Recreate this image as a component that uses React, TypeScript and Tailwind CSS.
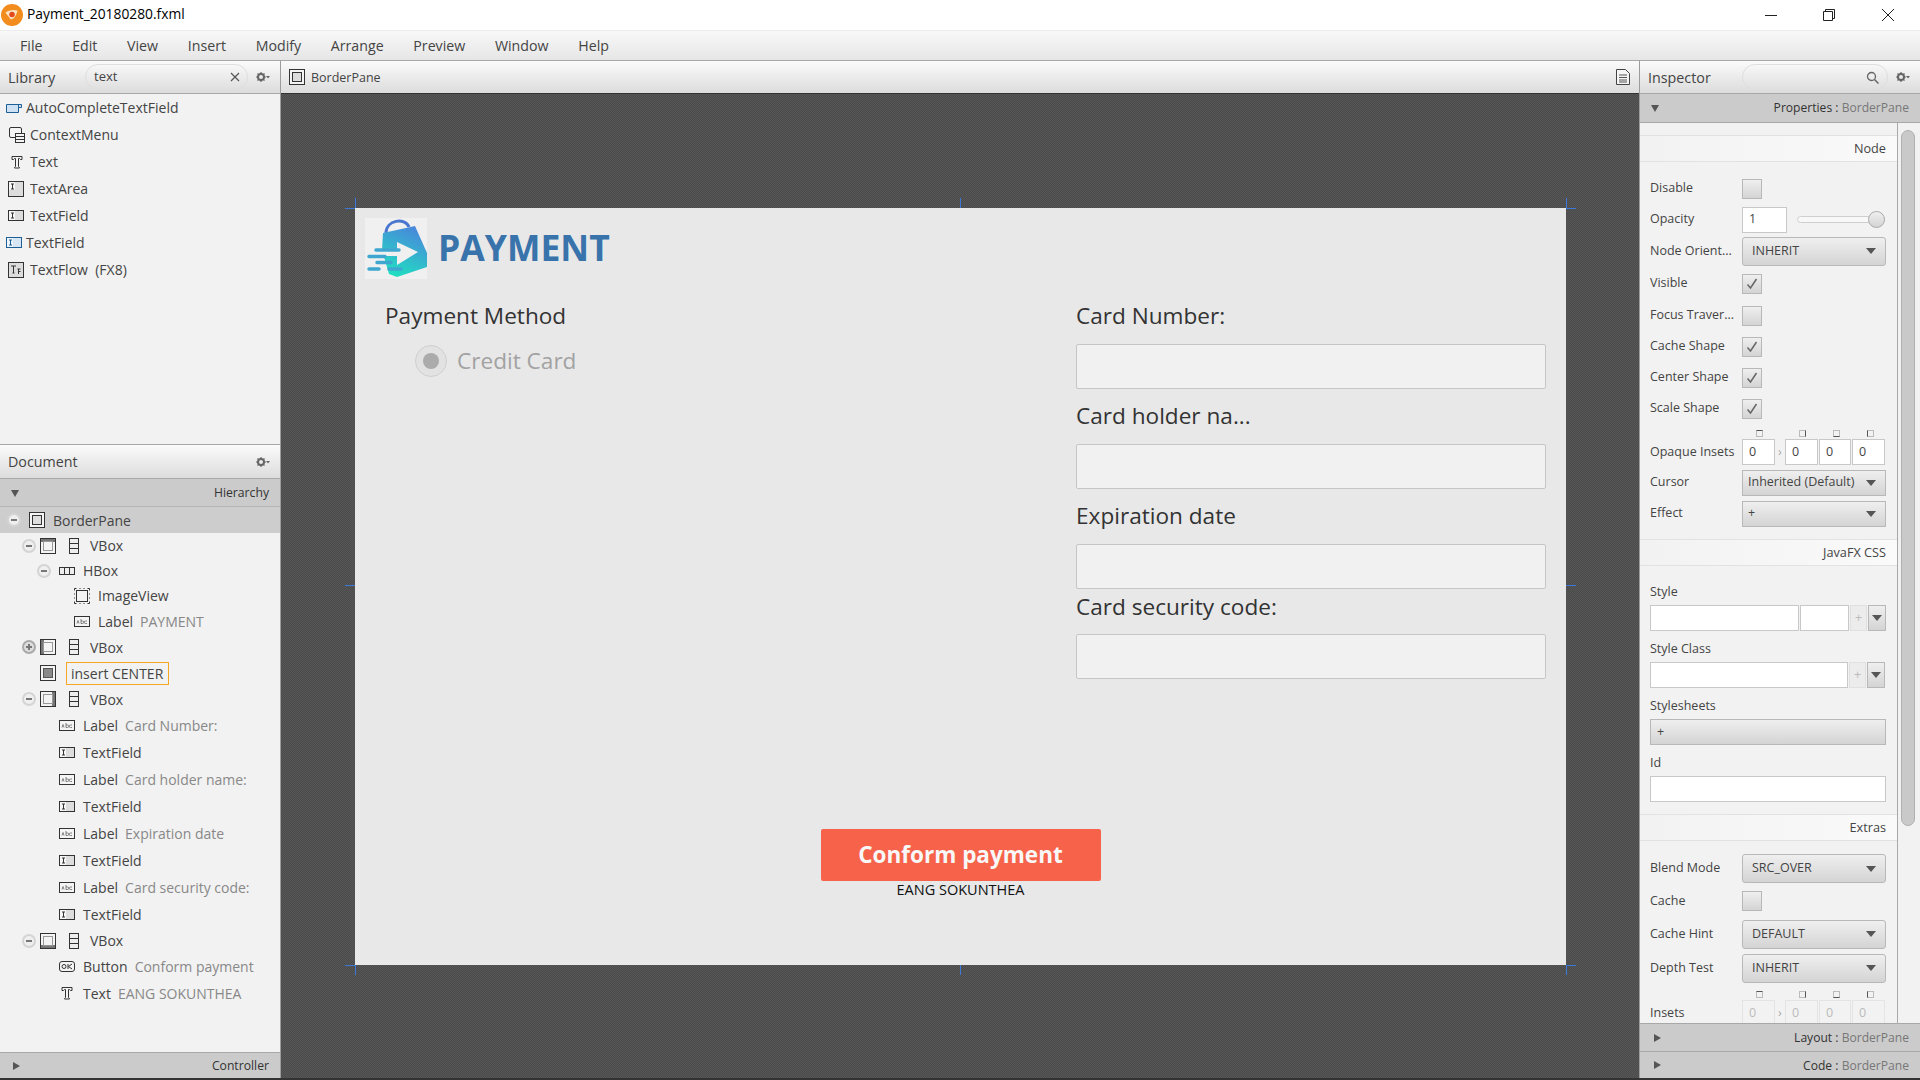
import type { ReactNode } from 'react'

const font = "font-['Open_Sans',sans-serif]"
const barGradient = 'bg-gradient-to-b from-[#fbfbfb] to-[#dcdcdc]'
const buttonGradient = 'bg-gradient-to-b from-[#efefef] to-[#d4d4d4]'

function Gear() {
  return (
    <svg width="14" height="10" viewBox="0 0 14 10" className="shrink-0">
      <circle cx="5" cy="5" r="3" fill="none" stroke="#666" strokeWidth="2" />
      <path d="M5 0v2M5 8v2M0 5h2M8 5h2M1.500 1.500l1.400 1.400M7.100 7.100l1.400 1.400M1.500 8.500l1.400-1.400M7.100 2.900l1.400-1.400" stroke="#666" strokeWidth="1.200" />
      <path d="M10 4h4l-2 2.500z" fill="#666" />
    </svg>
  )
}

function Chevron({ open, className }: { open: boolean; className?: string }) {
  return (
    <svg width="10" height="10" viewBox="0 0 10 10" className={className}>
      {open ? <path d="M1 2h8l-4 7z" fill="#555" /> : <path d="M2 1l7 4-7 4z" fill="#555" />}
    </svg>
  )
}

function Caret() {
  return (
    <svg width="10" height="6" viewBox="0 0 10 6" className="shrink-0">
      <path d="M0 0h10L5 6z" fill="#555" />
    </svg>
  )
}

function PaneIcon({ region }: { region: 'top' | 'left' | 'center' | 'right' | 'bottom' | 'all' }) {
  return (
    <svg width="16" height="16" viewBox="0 0 16 16" className="shrink-0">
      <rect x="0.500" y="0.500" width="15" height="15" fill="#f4f4f4" stroke="#333" />
      {region === 'top' && <rect x="1" y="1" width="14" height="3" fill="#777" />}
      {region === 'left' && <rect x="1" y="1" width="3" height="14" fill="#777" />}
      {region === 'right' && <rect x="12" y="1" width="3" height="14" fill="#777" />}
      {region === 'bottom' && <rect x="1" y="12" width="14" height="3" fill="#777" />}
      {region === 'center' && <rect x="3.500" y="3.500" width="9" height="9" fill="#8a8a8a" stroke="#555" />}
      {region === 'all' && <rect x="3.500" y="3.500" width="9" height="9" fill="#ddd" stroke="#333" />}
      {region !== 'center' && region !== 'all' && <rect x="3.500" y="3.500" width="9" height="9" fill="none" stroke="#999" />}
    </svg>
  )
}

function VBoxIcon() {
  return (
    <svg width="10" height="16" viewBox="0 0 10 16" className="shrink-0">
      <rect x="0.500" y="0.500" width="9" height="15" fill="#eee" stroke="#333" />
      <path d="M0 5.500h10M0 10.500h10" stroke="#333" />
    </svg>
  )
}

function HBoxIcon() {
  return (
    <svg width="16" height="8" viewBox="0 0 16 8" className="shrink-0">
      <rect x="0.500" y="0.500" width="15" height="7" fill="#eee" stroke="#333" />
      <path d="M5.500 0v8M10.500 0v8" stroke="#333" />
    </svg>
  )
}

function ImageIcon() {
  return (
    <svg width="16" height="16" viewBox="0 0 16 16" className="shrink-0">
      <rect x="2.500" y="2.500" width="11" height="11" fill="#f4f4f4" stroke="#333" />
      <path d="M0.500 2.500v-2h2M5.500 0.500h1M9.500 0.500h1M13.500 0.500h2v2M0.500 5.500v1M0.500 9.500v1M15.500 5.500v1M15.500 9.500v1M0.500 13.500v2h2M5.500 15.500h1M9.500 15.500h1M13.500 15.500h2v-2" stroke="#333" fill="none" />
    </svg>
  )
}

function LabelIcon() {
  return (
    <svg width="16" height="11" viewBox="0 0 16 11" className="shrink-0">
      <rect x="0.500" y="0.500" width="15" height="10" fill="#f4f4f4" stroke="#333" />
      <path d="M3 7.500l1-3 1 3M7 3v4.500h1.500a1 1 0 000-2.500H7M13 5h-1.500a1.200 1.200 0 000 2.500H13" stroke="#666" fill="none" strokeWidth="0.800" />
    </svg>
  )
}

function FieldIcon({ blue }: { blue?: boolean }) {
  const line = blue ? '#1c5f96' : '#333'
  return (
    <svg width="16" height="11" viewBox="0 0 16 11" className="shrink-0">
      <rect x="0.500" y="0.500" width="15" height="10" fill={blue ? '#d6e6f4' : '#ddd'} stroke={line} />
      <rect x="1" y="1" width="6" height="9" fill={blue ? '#eef5fb' : '#f6f6f6'} />
      <path d="M3 3h3M4.500 3v5M3 8h3" stroke={line} />
    </svg>
  )
}

function AreaIcon() {
  return (
    <svg width="16" height="16" viewBox="0 0 16 16" className="shrink-0">
      <rect x="0.500" y="0.500" width="15" height="15" fill="#ddd" stroke="#333" />
      <rect x="1" y="1" width="6" height="8" fill="#f6f6f6" />
      <path d="M3 3h3M4.500 3v5M3 8h3" stroke="#333" />
    </svg>
  )
}

function FlowIcon() {
  return (
    <svg width="16" height="16" viewBox="0 0 16 16" className="shrink-0">
      <rect x="0.500" y="0.500" width="15" height="15" fill="#ddd" stroke="#333" />
      <path d="M3 4h5M5.500 4v7M4.500 11h2M9.500 7h3M10.500 7v5M10.500 9.500h2" stroke="#333" fill="none" />
    </svg>
  )
}

function TextIcon() {
  return (
    <svg width="16" height="16" viewBox="0 0 16 16" className="shrink-0">
      <path d="M3 2.500h10v3h-1.500l-1-1H9.500v8l1 1v.5h-5v-.5l1-1v-8H5.500l-1 1H3z" fill="#f4f4f4" stroke="#333" />
    </svg>
  )
}

function OkIcon() {
  return (
    <svg width="16" height="11" viewBox="0 0 16 11" className="shrink-0">
      <rect x="0.500" y="0.500" width="15" height="10" rx="2.500" fill="#f4f4f4" stroke="#333" />
      <circle cx="5" cy="5.500" r="2" fill="none" stroke="#333" />
      <path d="M9 3v5M13 3l-3.500 2.500L13 8" fill="none" stroke="#333" />
    </svg>
  )
}

function MenuIcon() {
  return (
    <svg width="16" height="16" viewBox="0 0 16 16" className="shrink-0">
      <rect x="0.500" y="0.500" width="12" height="10" rx="1.500" fill="#f4f4f4" stroke="#333" />
      <rect x="6.500" y="6.500" width="9" height="9" fill="#f4f4f4" stroke="#333" />
      <path d="M6.500 9.500h9M6.500 12.500h9" stroke="#333" />
    </svg>
  )
}

function AutoIcon() {
  return (
    <svg width="16" height="11" viewBox="0 0 16 11" className="shrink-0">
      <path d="M0.500 2.500h15v3h-3v5h-12z" fill="#cfe2f3" stroke="#1c5f96" />
      <path d="M12.500 5.500V2.500" stroke="#1c5f96" />
    </svg>
  )
}

function Expander({ plus }: { plus?: boolean }) {
  return (
    <span className={`flex h-[14px] w-[14px] shrink-0 items-center justify-center rounded-full border-2 ${plus ? 'border-[#aaa] bg-[#ddd]' : 'border-[#d4d4d4] bg-[#efefef]'}`}>
      <span className="relative block h-[2px] w-[6px] bg-[#777]">
        {plus && <span className="absolute left-[2px] top-[-2px] h-[6px] w-[2px] bg-[#777]" />}
      </span>
    </span>
  )
}

function Logo() {
  return (
    <div className="h-[61px] w-[62px] shrink-0 bg-[#f0f0f0]">
      <svg width="62" height="61" viewBox="0 0 62 61">
        <defs>
          <linearGradient id="bag" x1="0.700" y1="0" x2="0.300" y2="1">
            <stop offset="0" stopColor="#4a86dc" />
            <stop offset="1" stopColor="#1fe0c0" />
          </linearGradient>
        </defs>
        <path d="M21 15C21 2 40 -1 44 9" fill="none" stroke="#4a76cf" strokeWidth="3" />
        <path d="M18 15L50 8L62 35V49L32 59L24 56L17 32z" fill="url(#bag)" />
        <path d="M10 31H32V24L53 34L32 47V38H8z" fill="#f0f0f0" />
        <path d="M11 32H34M4 38.500H20M12 44.500H26M4 51H14M24 51H36" stroke="#3fa6cf" strokeWidth="3.500" strokeLinecap="round" />
      </svg>
    </div>
  )
}

const libraryItems: { icon: ReactNode; name: string; pad: string }[] = [
  { icon: <AutoIcon />, name: 'AutoCompleteTextField', pad: 'pl-[6px] gap-[4px]' },
  { icon: <MenuIcon />, name: 'ContextMenu', pad: 'pl-[9px] gap-[5px]' },
  { icon: <TextIcon />, name: 'Text', pad: 'pl-[9px] gap-[5px]' },
  { icon: <AreaIcon />, name: 'TextArea', pad: 'pl-[8px] gap-[6px]' },
  { icon: <FieldIcon />, name: 'TextField', pad: 'pl-[8px] gap-[6px]' },
  { icon: <FieldIcon blue />, name: 'TextField', pad: 'pl-[6px] gap-[4px]' },
  { icon: <FlowIcon />, name: 'TextFlow  (FX8)', pad: 'pl-[8px] gap-[6px]' },
]

function TreeRow({ h, children }: { h: string; children: ReactNode }) {
  return <div className={`flex items-center ${h}`}>{children}</div>
}

function Leaf({ h, pad, icon, name, value }: { h: string; pad: string; icon: ReactNode; name: string; value?: string }) {
  return (
    <TreeRow h={`${h} ${pad} gap-[8px]`}>
      <span className="flex w-[16px] shrink-0 justify-center">{icon}</span>
      <span className="text-[#444]">{name}</span>
      {value && <span className="ml-[-1px] text-[#888]">{value}</span>}
    </TreeRow>
  )
}

function VBoxRow({ h, region, plus }: { h: string; region: 'top' | 'left' | 'right' | 'bottom'; plus?: boolean }) {
  return (
    <TreeRow h={`${h} pl-[22px]`}>
      <Expander plus={plus} />
      <span className="ml-[4px]"><PaneIcon region={region} /></span>
      <span className="ml-[13px]"><VBoxIcon /></span>
      <span className="ml-[11px] text-[#444]">VBox</span>
    </TreeRow>
  )
}

function Hierarchy() {
  return (
    <div className="flex-1 overflow-hidden">
      <TreeRow h="h-[26px] bg-[#cdcdcd] pl-[7px]">
        <Expander />
        <span className="ml-[8px]"><PaneIcon region="all" /></span>
        <span className="ml-[8px] text-[#444]">BorderPane</span>
      </TreeRow>
      <VBoxRow h="h-[25px]" region="top" />
      <TreeRow h="h-[25px] pl-[37px]">
        <Expander />
        <span className="ml-[8px]"><HBoxIcon /></span>
        <span className="ml-[8px] text-[#444]">HBox</span>
      </TreeRow>
      <Leaf h="h-[25px]" pad="pl-[74px]" icon={<ImageIcon />} name="ImageView" />
      <Leaf h="h-[26px]" pad="pl-[74px]" icon={<LabelIcon />} name="Label" value="PAYMENT" />
      <VBoxRow h="h-[26px]" region="left" plus />
      <TreeRow h="h-[26px] pl-[40px]">
        <PaneIcon region="center" />
        <span className="ml-[10px] flex h-[23px] w-[103px] items-center border border-[#f5a623] pl-[4px] text-[#444]">insert CENTER</span>
      </TreeRow>
      <VBoxRow h="h-[26px]" region="right" />
      <Leaf h="h-[27px]" pad="pl-[59px]" icon={<LabelIcon />} name="Label" value="Card Number:" />
      <Leaf h="h-[27px]" pad="pl-[59px]" icon={<FieldIcon />} name="TextField" />
      <Leaf h="h-[27px]" pad="pl-[59px]" icon={<LabelIcon />} name="Label" value="Card holder name:" />
      <Leaf h="h-[27px]" pad="pl-[59px]" icon={<FieldIcon />} name="TextField" />
      <Leaf h="h-[27px]" pad="pl-[59px]" icon={<LabelIcon />} name="Label" value="Expiration date" />
      <Leaf h="h-[27px]" pad="pl-[59px]" icon={<FieldIcon />} name="TextField" />
      <Leaf h="h-[27px]" pad="pl-[59px]" icon={<LabelIcon />} name="Label" value="Card security code:" />
      <Leaf h="h-[27px]" pad="pl-[59px]" icon={<FieldIcon />} name="TextField" />
      <VBoxRow h="h-[25px]" region="bottom" />
      <Leaf h="h-[27px]" pad="pl-[59px]" icon={<OkIcon />} name="Button" value="Conform payment" />
      <Leaf h="h-[26px]" pad="pl-[59px]" icon={<TextIcon />} name="Text" value="EANG SOKUNTHEA" />
    </div>
  )
}

function LeftPanel() {
  return (
    <aside className="flex w-[281px] shrink-0 flex-col border-r border-[#9c9c9c] bg-[#f2f2f2]">
      <div className={`flex h-[33px] items-center border-b border-[#a8a8a8] pl-[8px] pr-[10px] text-[14.5px] text-[#444] ${barGradient}`}>
        <span className="mt-px w-[77px]">Library</span>
        <div className="flex h-[26px] w-[163px] items-center justify-between rounded-full border border-[#dedede] pl-[8px] pr-[7px] text-[13px]">
          <span>text</span>
          <svg width="10" height="10" viewBox="0 0 10 10"><path d="M1 1l8 8M9 1L1 9" stroke="#555" strokeWidth="1.200" /></svg>
        </div>
        <span className="ml-[8px]"><Gear /></span>
      </div>
      <div className="h-[350px]">
        {libraryItems.map((item, i) => (
          <div key={i} className={`flex h-[27px] items-center whitespace-pre text-[#444] ${item.pad}`}>
            <span className="flex w-[16px] justify-center">{item.icon}</span>
            <span>{item.name}</span>
          </div>
        ))}
      </div>
      <div className={`flex h-[35px] items-center justify-between border-y border-[#a8a8a8] pl-[8px] pr-[10px] text-[14.3px] text-[#444] ${barGradient}`}>
        <span className="mt-px">Document</span>
        <Gear />
      </div>
      <div className="flex h-[28px] items-center justify-between border-b border-[#b5b5b5] bg-[#cbcbcb] pl-[10px] pr-[11px] text-[12.2px] text-[#333]">
        <Chevron open />
        <span className="mt-px">Hierarchy</span>
      </div>
      <Hierarchy />
      <div className="flex h-[26px] items-center justify-between border-t border-[#a8a8a8] bg-[#cbcbcb] pl-[11px] pr-[11px] text-[12.2px] text-[#333]">
        <Chevron open={false} />
        <span className="mt-[2px]">Controller</span>
      </div>
    </aside>
  )
}

function Handle({ className }: { className: string }) {
  return <span className={`absolute bg-[#3b78d8] ${className}`} />
}

const cardLabel = 'flex h-[34px] items-center text-[22.6px] text-[#333]'
const cardField = 'mt-[11px] h-[45px] border border-[#c6c6c6] rounded-[2px] bg-[#f1f1f1]'

function Card() {
  return (
    <div className="relative flex h-[757px] w-[1211px] flex-col bg-[#e8e8e8]">
      <Handle className="left-[-10px] top-0 h-px w-[10px]" />
      <Handle className="left-0 top-[-10px] h-[10px] w-px" />
      <Handle className="left-[605px] top-[-10px] h-[10px] w-px" />
      <Handle className="right-[-1px] top-[-10px] h-[10px] w-px" />
      <Handle className="right-[-10px] top-0 h-px w-[10px]" />
      <Handle className="left-[-10px] top-[377px] h-px w-[10px]" />
      <Handle className="right-[-10px] top-[377px] h-px w-[10px]" />
      <Handle className="bottom-[-1px] left-[-10px] h-px w-[10px]" />
      <Handle className="bottom-[-10px] left-0 h-[10px] w-px" />
      <Handle className="bottom-[-10px] left-[605px] h-[10px] w-px" />
      <Handle className="bottom-[-10px] right-[-1px] h-[10px] w-px" />
      <Handle className="bottom-[-1px] right-[-10px] h-px w-[10px]" />

      <div className="flex h-[71px] items-start gap-[11px] pl-[10px] pt-[10px]">
        <Logo />
        <h1 className="mt-[4px] text-[35.5px] font-bold leading-[50px] text-[#3873ab]">PAYMENT</h1>
      </div>

      <div className="flex h-[550px] justify-between pr-[20px]">
        <div className="pl-[30px] pt-[20px]">
          <div className={cardLabel}>Payment Method</div>
          <div className="ml-[30px] mt-[11px] flex items-center gap-[10px]">
            <span className="flex h-[32px] w-[32px] items-center justify-center rounded-full border border-[#cfcfcf] bg-[#e2e2e2]">
              <span className="h-[16px] w-[16px] rounded-full bg-[#ababab]" />
            </span>
            <span className="text-[22.6px] text-[#a2a2a2]">Credit Card</span>
          </div>
        </div>
        <div className="w-[470px] pt-[20px]">
          <div className={cardLabel}>Card Number:</div>
          <div className={cardField} />
          <div className={`${cardLabel} mt-[10px]`}>Card holder na...</div>
          <div className={cardField} />
          <div className={`${cardLabel} mt-[10px]`}>Expiration date</div>
          <div className={cardField} />
          <div className={`${cardLabel} mt-px`}>Card security code:</div>
          <div className="mt-[10px] h-[45px] rounded-[2px] border border-[#c6c6c6] bg-[#f1f1f1]" />
        </div>
      </div>

      <div className="flex flex-col items-center">
        <button className="h-[52px] w-[280px] rounded-[2px] bg-[#f7634a] text-[22.5px] font-bold text-[#f8f8f8]">Conform payment</button>
        <span className="text-[14.5px] leading-[18px] text-[#111]">EANG SOKUNTHEA</span>
      </div>
    </div>
  )
}

function Center() {
  return (
    <main className="flex min-w-0 flex-1 flex-col">
      <div className={`flex h-[33px] items-center justify-between border-b border-[#333] pl-[8px] pr-[9px] text-[12.5px] text-[#444] ${barGradient}`}>
        <div className="flex items-center gap-[6px]">
          <PaneIcon region="all" />
          <span className="mt-[2px]">BorderPane</span>
        </div>
        <svg width="14" height="16" viewBox="0 0 14 16">
          <path d="M0.500 0.500h9l4 4v11h-13z" fill="#f6f6f6" stroke="#444" />
          <path d="M3 6h8M3 8.500h8M3 11h8M3 13h8" stroke="#555" />
        </svg>
      </div>
      <div className="flex-1 bg-[repeating-conic-gradient(#575757_0_25%,#4a4a4a_0_50%)] bg-[length:2px_2px] pl-[74px] pt-[114px]">
        <Card />
      </div>
    </main>
  )
}

function Section({ title }: { title: string }) {
  return (
    <div className="flex h-[27px] items-center justify-end border-y border-[#e2e2e2] bg-gradient-to-r from-[#f2f2f2] to-[#fafafa] pr-[11px] text-[12.7px] text-[#444]">
      {title}
    </div>
  )
}

function Row({ label, h, children }: { label: string; h: string; children: ReactNode }) {
  return (
    <div className={`flex items-center pl-[10px] text-[12.5px] text-[#444] ${h}`}>
      <span className="w-[91px] shrink-0 whitespace-nowrap">{label}</span>
      <span className="flex items-center pl-px">{children}</span>
    </div>
  )
}

function CheckBox({ checked }: { checked?: boolean }) {
  return (
    <span className={`flex h-[20px] w-[20px] items-center justify-center border border-[#b8b8b8] ${buttonGradient}`}>
      {checked && (
        <svg width="12" height="12" viewBox="0 0 12 12"><path d="M1.500 6.500l3 3.500 6-9" fill="none" stroke="#666" strokeWidth="1.500" /></svg>
      )}
    </span>
  )
}

function Select({ value, h = 'h-[29px]', rounded = 'rounded-[3px]', px = 'pl-[9px]' }: { value: string; h?: string; rounded?: string; px?: string }) {
  return (
    <div className={`flex w-[144px] items-center justify-between border border-[#b8b8b8] pr-[9px] text-[#444] ${h} ${rounded} ${px} ${buttonGradient}`}>
      <span>{value}</span>
      <Caret />
    </div>
  )
}

function TextInput({ w, h = 'h-[26px]', dim, value }: { w: string; h?: string; dim?: boolean; value?: string }) {
  return (
    <span className={`flex items-center border pl-[6px] ${w} ${h} ${dim ? 'border-[#e4e4e4] bg-[#f2f2f2] text-[#bbb]' : 'border-[#c8c8c8] bg-white text-[#444]'}`}>
      {value}
    </span>
  )
}

function InsetMarks({ h, align }: { h: string; align: string }) {
  const marks = ['border-t-[#555]', 'border-r-[#555]', 'border-b-[#555]', 'border-l-[#555]']
  const lefts = ['ml-[116px]', 'ml-[36px]', 'ml-[27px]', 'ml-[27px]']
  return (
    <div className={`flex ${h} ${align}`}>
      {marks.map((m, i) => (
        <span key={m} className={`block h-[7px] w-[7px] border border-[#bbb] ${m} ${lefts[i]}`} />
      ))}
    </div>
  )
}

function InsetInputs({ dim }: { dim?: boolean }) {
  return (
    <div className={`flex items-center ${dim ? 'text-[#bbb]' : ''}`}>
      <TextInput w="w-[33px]" dim={dim} value="0" />
      <span className="w-[10px] text-center text-[#aaa]">›</span>
      <TextInput w="w-[33px]" dim={dim} value="0" />
      <span className="ml-px"><TextInput w="w-[32px]" dim={dim} value="0" /></span>
      <span className="ml-px"><TextInput w="w-[33px]" dim={dim} value="0" /></span>
    </div>
  )
}

function PlusButton({ w }: { w: string }) {
  return <span className={`flex h-[26px] items-center justify-center border border-[#e0e0e0] bg-[#ececec] text-[#bbb] ${w}`}>+</span>
}

function ArrowButton() {
  return (
    <span className={`flex h-[26px] w-[18px] items-center justify-center border border-[#b8b8b8] ${buttonGradient}`}>
      <Caret />
    </span>
  )
}

function FieldLabel({ mt, children }: { mt: string; children: ReactNode }) {
  return <div className={`flex h-[20px] items-center pl-[10px] text-[12.5px] text-[#444] ${mt}`}>{children}</div>
}

function Inspector() {
  return (
    <aside className="flex w-[281px] shrink-0 flex-col border-l border-[#9c9c9c] bg-[#f2f2f2]">
      <div className={`flex h-[33px] items-center border-b border-[#a8a8a8] pl-[8px] pr-[10px] text-[14.3px] text-[#444] ${barGradient}`}>
        <span className="mt-px w-[94px]">Inspector</span>
        <div className="flex h-[26px] w-[146px] items-center justify-end rounded-full border border-[#dedede] pr-[8px]">
          <svg width="13" height="13" viewBox="0 0 13 13"><circle cx="5.500" cy="5.500" r="4" fill="none" stroke="#666" strokeWidth="1.300" /><path d="M8.500 8.500l4 4" stroke="#666" strokeWidth="1.500" /></svg>
        </div>
        <span className="ml-[8px]"><Gear /></span>
      </div>
      <div className="flex h-[29px] items-center justify-between border-b border-[#a8a8a8] bg-[#cbcbcb] pl-[10px] pr-[11px] text-[12.1px]">
        <Chevron open />
        <span className="text-[#333]">Properties : <span className="text-[#777]">BorderPane</span></span>
      </div>
      <div className="flex h-[900px] overflow-hidden">
        <div className="w-[257px] shrink-0 overflow-hidden pt-[12px]">
          <Section title="Node" />
          <div className="h-[11px]" />
          <Row label="Disable" h="h-[31px]"><CheckBox /></Row>
          <Row label="Opacity" h="h-[31px]">
            <TextInput w="w-[45px]" value="1" />
            <span className="relative ml-[10px] block h-[7px] w-[88px] rounded-full border border-[#cfcfcf] bg-[#f8f8f8]">
              <span className={`absolute right-[-1px] top-[-6px] h-[17px] w-[17px] rounded-full border border-[#aaa] ${buttonGradient}`} />
            </span>
          </Row>
          <Row label="Node Orient..." h="h-[32px]"><Select value="INHERIT" /></Row>
          <Row label="Visible" h="h-[33px]"><CheckBox checked /></Row>
          <Row label="Focus Traver..." h="h-[31px]"><CheckBox /></Row>
          <Row label="Cache Shape" h="h-[31px]"><CheckBox checked /></Row>
          <Row label="Center Shape" h="h-[31px]"><CheckBox checked /></Row>
          <Row label="Scale Shape" h="h-[31px]"><CheckBox checked /></Row>
          <InsetMarks h="h-[13px]" align="items-end" />
          <Row label="Opaque Insets" h="h-[30px]"><InsetInputs /></Row>
          <Row label="Cursor" h="h-[31px]"><Select value="Inherited (Default)" h="h-[26px]" rounded="rounded-none" px="pl-[5px]" /></Row>
          <Row label="Effect" h="h-[31px]"><Select value="+" h="h-[26px]" rounded="rounded-none" px="pl-[5px]" /></Row>
          <div className="h-[10px]" />
          <Section title="JavaFX CSS" />
          <FieldLabel mt="mt-[16px]">Style</FieldLabel>
          <div className="ml-[10px] mt-[3px] flex gap-px text-[12.5px]">
            <TextInput w="w-[149px]" />
            <TextInput w="w-[49px]" />
            <PlusButton w="w-[17px]" />
            <ArrowButton />
          </div>
          <FieldLabel mt="mt-[8px]">Style Class</FieldLabel>
          <div className="ml-[10px] mt-[3px] flex gap-px text-[12.5px]">
            <TextInput w="w-[198px]" />
            <PlusButton w="w-[17px]" />
            <ArrowButton />
          </div>
          <FieldLabel mt="mt-[8px]">Stylesheets</FieldLabel>
          <div className={`ml-[10px] mt-[3px] flex h-[26px] w-[236px] items-center border border-[#b8b8b8] pl-[6px] text-[12.5px] text-[#444] ${buttonGradient}`}>+</div>
          <FieldLabel mt="mt-[8px]">Id</FieldLabel>
          <div className="ml-[10px] mt-[3px]"><TextInput w="w-[236px]" /></div>
          <div className="h-[12px]" />
          <Section title="Extras" />
          <div className="h-[11px]" />
          <Row label="Blend Mode" h="h-[33px]"><Select value="SRC_OVER" /></Row>
          <Row label="Cache" h="h-[32px]"><CheckBox /></Row>
          <Row label="Cache Hint" h="h-[34px]"><Select value="DEFAULT" /></Row>
          <Row label="Depth Test" h="h-[34px]"><Select value="INHERIT" /></Row>
          <InsetMarks h="h-[13px]" align="items-end" />
          <Row label="Insets" h="h-[30px]"><InsetInputs dim /></Row>
        </div>
        <div className="flex-1 border-l border-[#a8a8a8] pl-[3px] pt-[7px]">
          <div className="h-[696px] w-[14px] rounded-full border border-[#b0b0b0] bg-[#c9c9c9]" />
        </div>
      </div>
      <div className="flex h-[29px] items-center justify-between border-y border-[#a8a8a8] bg-[#cbcbcb] pl-[12px] pr-[11px] text-[12.1px]">
        <Chevron open={false} />
        <span className="mt-px text-[#333]">Layout : <span className="text-[#777]">BorderPane</span></span>
      </div>
      <div className="flex h-[26px] items-center justify-between bg-[#cbcbcb] pl-[12px] pr-[11px] text-[12.1px]">
        <Chevron open={false} />
        <span className="mt-[2px] text-[#333]">Code : <span className="text-[#777]">BorderPane</span></span>
      </div>
    </aside>
  )
}

const menus = ['File', 'Edit', 'View', 'Insert', 'Modify', 'Arrange', 'Preview', 'Window', 'Help']

export default function App() {
  return (
    <div className={`flex h-[1080px] w-[1920px] flex-col overflow-hidden bg-[#333] text-[14px] ${font}`}>
      <header className="flex h-[30px] shrink-0 items-center bg-white pb-px text-[13.8px] text-black">
        <svg width="22" height="22" viewBox="0 0 20 20" className="ml-px">
          <circle cx="10" cy="10" r="10" fill="#f28c1e" />
          <path d="M4 8c3-3 8-3 11-2-1 4-3 8-6 8-2-2-3-4-5-6z" fill="#fbe3c4" />
          <circle cx="10" cy="9.500" r="2.500" fill="#e2491c" />
        </svg>
        <span className="ml-[4px]">Payment_20180280.fxml</span>
        <div className="ml-auto flex items-center gap-[46px] pr-[26px]">
          <svg width="12" height="12" viewBox="0 0 12 12"><path d="M0 6.500h12" stroke="#222" /></svg>
          <svg width="12" height="12" viewBox="0 0 12 12" className="mr-px"><path d="M2.500 2.500V0.500h9v9h-2M0.500 2.500h9v9h-9z" fill="none" stroke="#222" /></svg>
          <svg width="12" height="12" viewBox="0 0 12 12"><path d="M0 0l12 12M12 0L0 12" stroke="#222" /></svg>
        </div>
      </header>
      <nav className="flex h-[31px] shrink-0 items-center gap-[29.7px] border-y border-t-[#ececec] border-b-[#a8a8a8] bg-gradient-to-b from-[#f8f8f8] to-[#e6e6e6] pl-[20px] text-[14.2px] text-[#444]">
        {menus.map(m => <span key={m}>{m}</span>)}
      </nav>
      <div className="flex h-[1017px] shrink-0">
        <LeftPanel />
        <Center />
        <Inspector />
      </div>
    </div>
  )
}
